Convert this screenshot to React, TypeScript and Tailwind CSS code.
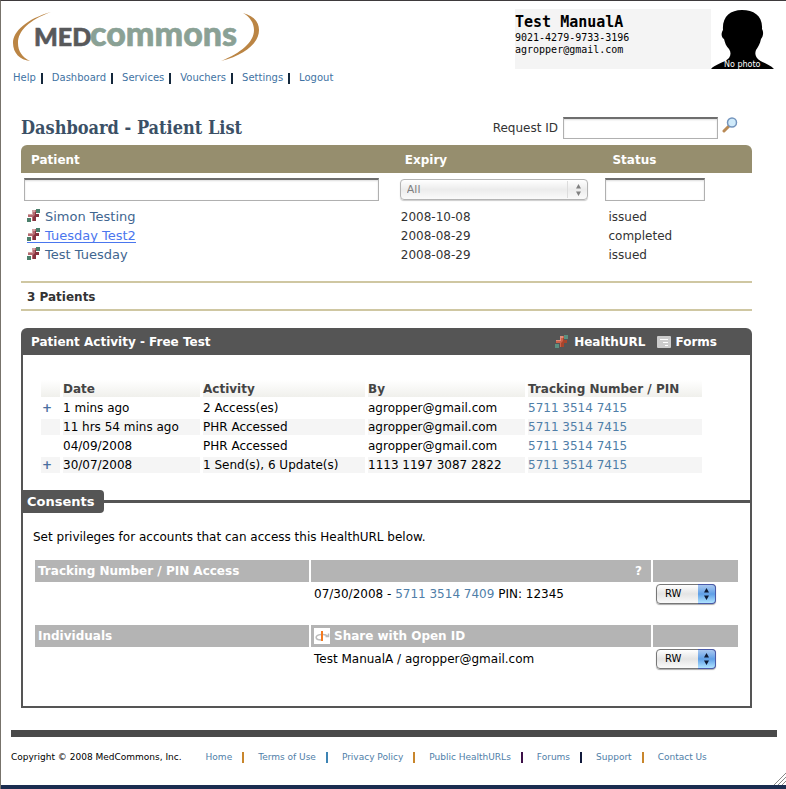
import React from "react";

const mono = "font-['DejaVu_Sans_Mono',monospace]";
const field =
  "block bg-white border border-[#b0b0b0] border-t-2 border-t-[#6e6e6e] shadow-[inset_0_1px_2px_#dddddd] px-1 outline-none";

const nav = ["Help", "Dashboard", "Services", "Vouchers", "Settings", "Logout"];
const footer = [
  { label: "Home", bar: "border-[#c8862c]" },
  { label: "Terms of Use", bar: "border-[#3d84b4]" },
  { label: "Privacy Policy", bar: "border-[#c8862c]" },
  { label: "Public HealthURLs", bar: "border-[#3d1048]" },
  { label: "Forums", bar: "border-[#111a3c]" },
  { label: "Support", bar: "border-[#c8862c]" },
  { label: "Contact Us", bar: "" },
];
const patients = [
  { name: "Simon Testing", expiry: "2008-10-08", status: "issued", active: false },
  { name: "Tuesday Test2", expiry: "2008-08-29", status: "completed", active: true },
  { name: "Test Tuesday", expiry: "2008-08-29", status: "issued", active: false },
];
const activity = [
  { more: true, date: "1 mins ago", what: "2 Access(es)", by: "agropper@gmail.com" },
  { more: false, date: "11 hrs 54 mins ago", what: "PHR Accessed", by: "agropper@gmail.com" },
  { more: false, date: "04/09/2008", what: "PHR Accessed", by: "agropper@gmail.com" },
  { more: true, date: "30/07/2008", what: "1 Send(s), 6 Update(s)", by: "1113 1197 3087 2822" },
];

function CrossIcon({ bright = false, className = "" }: { bright?: boolean; className?: string }) {
  const square = bright ? "#5c8f80" : "#4b7f6b";
  return (
    <svg width="13" height="13" viewBox="0 0 13 13" className={"block shrink-0 " + className} aria-hidden="true">
      <rect x="9" y="0" width="4" height="4" fill={square} />
      <rect x="0" y="9" width="4" height="4" fill={square} />
      <path d="M5 1h4v4h3v3H9v4H5V8H1V5h4z" fill={bright ? "#cf6249" : "#b56a70"} />
      <path d="M8 3h1v2h3v3H9v4H6V8l2-2z" fill={bright ? "#a8452c" : "#86343f"} />
      <path d="M5 1h3v2H6v3H1V5h4z" fill={bright ? "#e08f7c" : "#d0a0a0"} />
    </svg>
  );
}

function Logo() {
  return (
    <svg width="248" height="52" viewBox="0 0 248 52" className="block" role="img" aria-label="MEDcommons">
      <path d="M38 0C14 7 0 19 0 31c0 10 7 17 17 18C9 45 5 39 5 31 5 19 16 8 38 0z" fill="#bb8544" />
      <path d="M230 1c11 3 16 9 16 17 0 13-14 25-38 31 20-8 33-19 33-31 0-7-4-13-11-17z" fill="#bb8544" />
      <text x="21" y="34" fontFamily="Lato" fontWeight="900" fontSize="25" fill="#58595b" stroke="#58595b" strokeWidth="0.6">MED</text>
      <text x="77" y="34" fontFamily="Lato" fontWeight="900" fontSize="34" fill="#8aa195" stroke="#8aa195" strokeWidth="0.6">commons</text>
    </svg>
  );
}

function Arrows({ color }: { color: string }) {
  return (
    <svg width="7" height="12" viewBox="0 0 7 12" aria-hidden="true">
      <path d="M1 4.500L3.500 0 6 4.500zM1 7.500h5L3.500 12z" fill={color} />
    </svg>
  );
}

function RightsSelect({ label }: { label: string }) {
  return (
    <div className="relative h-5 w-[60px]">
      <select
        aria-label={label}
        className="block h-5 w-full appearance-none rounded-[4px] border border-[#777777] bg-linear-to-b from-white via-[#e4e4e4] to-[#fafafa] pl-2 text-[10px] leading-4 text-black shadow-[0_1px_1px_#aaaaaa]"
      >
        <option>RW</option>
        <option>R</option>
      </select>
      <span className="pointer-events-none absolute inset-y-0 right-0 flex w-[18px] items-center justify-center rounded-r-[4px] border border-l-0 border-[#4a5aa8] bg-linear-to-b from-[#a9c8f0] via-[#5f9fe6] to-[#b0e4ff]">
        <Arrows color="#0d1a33" />
      </span>
    </div>
  );
}

export default function App() {
  return (
    <div className="flex min-h-screen flex-col border-l border-t border-l-[#77736b] border-t-[#3e3a3c] bg-white font-['DejaVu_Sans',Verdana,sans-serif] text-[13px] leading-4 text-black">
      <header className="flex items-start justify-between pl-3 pr-3">
        <div className="pt-[11px]">
          <Logo />
          <nav className="mt-[6px] flex text-[10px] leading-4">
            {nav.map((n, i) => (
              <span key={n} className="flex items-center">
                <a href="#" className="text-[#3f73a3]">{n}</a>
                {i < nav.length - 1 && <span className="ml-[5px] mr-[9px] h-[11px] border-l-2 border-[#14283c]" />}
              </span>
            ))}
          </nav>
        </div>
        <div className="flex pt-2">
          <div className={"h-[60px] w-[196px] bg-[#f4f4f4] pt-[6px] text-[10px] leading-3 " + mono}>
            <div className="text-[15px] leading-[15px] font-bold">Test ManualA</div>
            <div className="mt-[2px]">9021-4279-9733-3196</div>
            <div>agropper@gmail.com</div>
          </div>
          <svg width="63" height="60" viewBox="0 0 63 60" role="img" aria-label="No photo">
            <path d="M0 60c4-5 13-6 18-11 2-3 2-6 0-9-3-3-4-6-5-10-3-2-3-6-1-9C11 8 19 1 31 1s21 6 20 19c2 3 1 8-1 10-1 5-3 8-5 11-1 3-1 5 1 8 4 5 13 6 17 11z" fill="#000" />
            <text x="13" y="58" fontFamily="DejaVu Sans" fontSize="8" fill="#fff">No photo</text>
          </svg>
        </div>
      </header>

      <main className="ml-5 mr-[34px] mt-[27px]">
        <div className="flex h-8 items-center justify-between pb-[2px]">
          <h1 className="font-['DejaVu_Serif_Condensed','DejaVu_Serif',serif] text-[18px] leading-6 font-bold text-[#3b5066]">Dashboard - Patient List</h1>
          <form className="flex items-center pr-[14px]">
            <label htmlFor="req" className="mr-[5px] text-[12px] text-[#333333]">Request ID</label>
            <input id="req" className={field + " h-[22px] w-[155px]"} />
            <button type="button" aria-label="Search" className="ml-1 self-start">
              <svg width="16" height="16" viewBox="0 0 16 16">
                <path d="M2 14l5-5" stroke="#b98a55" strokeWidth="3" strokeLinecap="round" />
                <circle cx="10" cy="5.500" r="4.500" fill="#cfeafa" stroke="#7394bd" strokeWidth="1.500" />
              </svg>
            </button>
          </form>
        </div>

        <table className="w-full table-fixed border-collapse text-left text-[12px] text-[#333333]">
          <colgroup>
            <col className="w-[51%]" />
            <col className="w-[28%]" />
            <col />
          </colgroup>
          <thead>
            <tr className="h-7 text-white">
              <th className="rounded-tl-[6px] bg-[#968e6e] pt-[2px] pb-0 pl-[10px]">Patient</th>
              <th className="bg-[#968e6e] pt-[2px] pb-0 pl-[11px]">Expiry</th>
              <th className="rounded-tr-[6px] bg-[#968e6e] pt-[2px] pb-0 pl-[14px]">Status</th>
            </tr>
          </thead>
          <tbody>
            <tr className="h-[34px] align-top">
              <td className="pt-[5px] pb-0 pl-[3px] pr-[15px]"><input aria-label="Filter patients" className={field + " h-[23px] w-full"} /></td>
              <td className="pt-[6px] pb-0 pl-[6px] pr-[10px]">
                <div className="relative">
                  <select aria-label="Expiry filter" disabled className="block h-[21px] w-full appearance-none rounded-[4px] border border-[#b4b4b4] bg-linear-to-b from-white via-[#ececec] to-[#fafafa] pl-[6px] text-[11px] leading-4 text-[#808080] opacity-100 shadow-[0_1px_1px_#cccccc]">
                    <option>All</option>
                  </select>
                  <span className="pointer-events-none absolute inset-y-[2px] right-0 flex w-[21px] items-center justify-center border-l border-[#dddddd]"><Arrows color="#808080" /></span>
                </div>
              </td>
              <td className="pt-[5px] pb-0 pl-[7px]"><input aria-label="Filter status" className={field + " h-[23px] w-[100px]"} /></td>
            </tr>
            {patients.map((p) => (
              <tr key={p.name} className="h-[19px]">
                <td className="p-0 pt-[2px] pl-[6px]">
                  <a
                    href="#"
                    className={
                      p.active
                        ? "flex w-fit items-start gap-[5px] border-b border-[#4a76ee] text-[13px] leading-3 text-[#4a76ee]"
                        : "flex w-fit items-start gap-[5px] border-b border-transparent text-[13px] leading-3 text-[#3f6690]"
                    }
                  >
                    <CrossIcon className="-mt-[2px]" />{p.name}
                  </a>
                </td>
                <td className="p-0 pl-[7px]">{p.expiry}</td>
                <td className="p-0 pl-[10px]">{p.status}</td>
              </tr>
            ))}
          </tbody>
        </table>
        <div className="mt-[17px] h-[30px] border-y-2 border-[#cfc7a2] pl-[6px] text-[12px] leading-7 font-bold text-[#333333]">3 Patients</div>

        <section className="mt-[17px]">
          <div className="flex h-[27px] items-center rounded-t-[6px] bg-[#555555] pl-[10px] pr-[35px] text-[12px] font-bold text-white">
            <h2 className="flex-1">Patient Activity - Free Test</h2>
            <a href="#" className="flex items-center gap-[6px]"><CrossIcon bright />HealthURL</a>
            <a href="#" className="ml-3 flex items-center gap-1">
              <svg width="14" height="12" viewBox="0 0 14 12" aria-hidden="true">
                <rect width="14" height="12" rx="1" fill="#cccccc" />
                <path d="M3 3.500h8M6 6.500h5M8 9.500h3" stroke="#fff" />
              </svg>
              Forms
            </a>
          </div>
          <div className="border-2 border-t-0 border-[#555555] pb-[37px]">
            <div className="pl-[15px] pr-[45px] pt-[22px]">
              <table className="w-full border-separate border-spacing-x-[3px] border-spacing-y-[3px] text-left text-[12px]">
                <colgroup>
                  <col className="w-[19px]" />
                  <col className="w-[137px]" />
                  <col className="w-[162px]" />
                  <col className="w-[157px]" />
                  <col />
                </colgroup>
                <thead>
                  <tr className="h-[17px] text-[#444444]">
                    {["", "Date", "Activity", "By", "Tracking Number / PIN"].map((h) => (
                      <th key={h} className="bg-linear-to-b from-white to-[#f0f0ec] p-0 leading-4">{h}</th>
                    ))}
                  </tr>
                </thead>
                <tbody>
                  {activity.map((a, i) => {
                    const c = i % 2 ? "bg-[#f5f5f5] p-0" : "p-0";
                    return (
                      <tr key={a.date} className="h-4">
                        <td className={c + " pl-[1px] font-bold text-[#4a6fa0]"}>{a.more ? "+" : ""}</td>
                        <td className={c}>{a.date}</td>
                        <td className={c}>{a.what}</td>
                        <td className={c}>{a.by}</td>
                        <td className={c}><a href="#" className="text-[#4f7ea8]">5711 3514 7415</a></td>
                      </tr>
                    );
                  })}
                </tbody>
              </table>
            </div>
            <div className="mt-[14px] flex items-center">
              <h2 className="h-[23px] rounded-r-[4px] bg-[#555555] pl-1 pr-[9px] text-[13px] leading-6 font-bold text-white">Consents</h2>
              <div className="h-[3px] flex-1 bg-[#555555]" />
            </div>
            <p className="mt-4 pl-[10px] text-[12px]">Set privileges for accounts that can access this HealthURL below.</p>
            <table className="mt-[15px] ml-[10px] table-fixed border-separate border-spacing-x-[2px] border-spacing-y-0 text-left text-[12px] w-[calc(100%-20px)]">
              <colgroup>
                <col className="w-[274px]" />
                <col />
                <col className="w-[85px]" />
              </colgroup>
              <tbody>
                <tr className="h-[22px] text-white">
                  <th className="bg-[#b4b4b4] p-0 pl-[3px]">Tracking Number / PIN Access</th>
                  <th className="bg-[#b4b4b4] p-0 pr-[9px] text-right">?</th>
                  <td className="bg-[#b4b4b4] p-0" />
                </tr>
                <tr className="h-[43px] align-top">
                  <td />
                  <td className="p-0 pt-1 pl-[3px]">07/30/2008 - <a href="#" className="text-[#4f7ea8]">5711 3514 7409</a> PIN: 12345</td>
                  <td className="p-0 pt-[2px] pl-[3px]"><RightsSelect label="PIN access rights" /></td>
                </tr>
                <tr className="h-[22px] text-white">
                  <th className="bg-[#b4b4b4] p-0 pl-[3px]">Individuals</th>
                  <th className="bg-[#b4b4b4] p-0 pl-[3px]">
                    <span className="flex items-center gap-1">
                      <svg width="16" height="16" viewBox="0 0 16 16" aria-hidden="true">
                        <rect width="16" height="16" fill="#fff" />
                        <path d="M7 12C1 12 0 7 7 6.500M9 6.500c2 0 3 0 5 2M14.500 5.500v3h-3" fill="none" stroke="#bbbbbb" strokeWidth="1.500" />
                        <path d="M8 3v10" stroke="#f47a20" strokeWidth="2" />
                      </svg>
                      Share with Open ID
                    </span>
                  </th>
                  <td className="bg-[#b4b4b4] p-0" />
                </tr>
                <tr className="align-top">
                  <td />
                  <td className="p-0 pt-1 pl-[3px]">Test ManualA / agropper@gmail.com</td>
                  <td className="p-0 pt-[2px] pl-[3px]"><RightsSelect label="Individual rights" /></td>
                </tr>
              </tbody>
            </table>
          </div>
        </section>
      </main>

      <footer className="mt-[22px] ml-[10px] mr-[9px]">
        <div className="h-[7px] bg-[#4a4a4a]" />
        <div className="mt-3 flex text-[9px] leading-4 whitespace-nowrap">
          <span className="mr-6">Copyright © 2008 MedCommons, Inc.</span>
          {footer.map((f) => (
            <span key={f.label} className="flex items-center">
              <a href="#" className="text-[#4f7ea8]">{f.label}</a>
              {f.bar && <span className={"ml-[10px] mr-[14px] h-[11px] border-l-2 " + f.bar} />}
            </span>
          ))}
        </div>
      </footer>
      <div className="mt-auto flex flex-col items-end">
        <svg width="12" height="12" viewBox="0 0 12 12" aria-hidden="true">
          <path d="M0 12L12 0M4 12l8-8M8 12l4-4" stroke="#888888" />
        </svg>
        <div className="h-1 w-full bg-[#1b2d50]" />
      </div>
    </div>
  );
}
